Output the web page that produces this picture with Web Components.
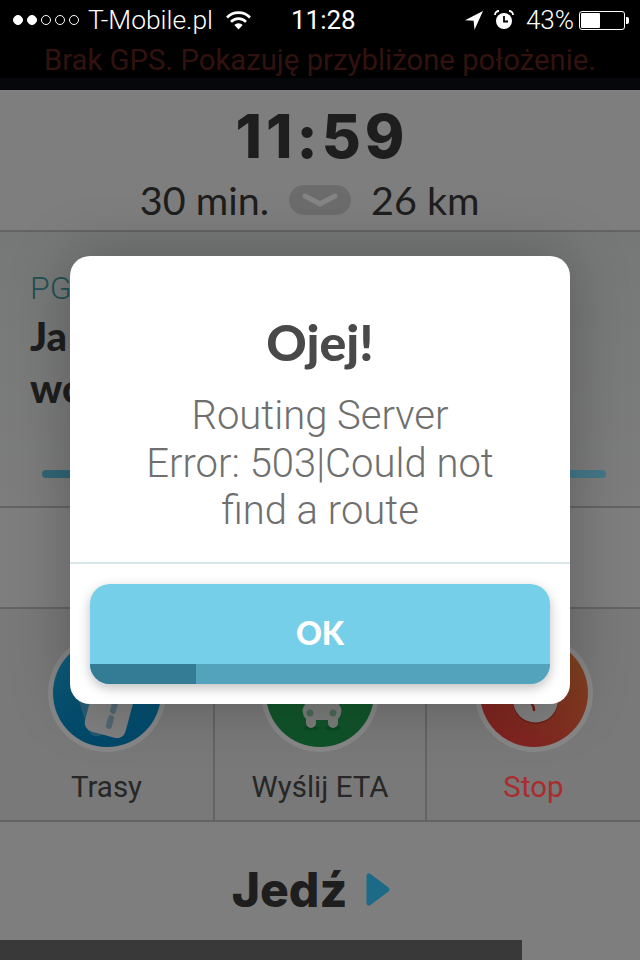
<!DOCTYPE html>
<html lang="pl">
<head>
<meta charset="utf-8">
<title>Ojej!</title>
<style>
  html, body { margin: 0; padding: 0; height: 960px; overflow: hidden; background: #000; }
</style>
</head>
<body>
<app-screen>
  <status-bar></status-bar>
  <gps-banner>Brak GPS. Pokazuję przybliżone położenie.</gps-banner>
  <eta-header time="11:59" duration="30 min." distance="26 km"></eta-header>
  <route-card>
    <span slot="tag">PG</span>
    <span slot="line1">Ja</span>
    <span slot="line2">wo</span>
  </route-card>
  <empty-row></empty-row>
  <action-row>
    <action-tile label="Trasy">
      <svg slot="icon" viewBox="0 0 118 118" width="118" height="118">
        <defs>
          <linearGradient id="b" x1="0" y1="0" x2="0" y2="1"><stop offset="0" stop-color="#1fb8f0"/><stop offset="1" stop-color="#0087c8"/></linearGradient>
          <clipPath id="cb"><circle cx="59" cy="59" r="54"/></clipPath>
        </defs>
        <circle cx="59" cy="59" r="59" fill="#fff"/>
        <circle cx="59" cy="59" r="54" fill="url(#b)"/>
        <g clip-path="url(#cb)">
          <rect x="30" y="22" width="42" height="78" rx="9" fill="#9bd8ee" opacity=".45" transform="rotate(-18 51 61)"/>
          <rect x="44" y="24" width="42" height="78" rx="9" fill="#f2f2f2" transform="rotate(15 65 63)"/>
          <rect x="63" y="66" width="6" height="14" rx="3" fill="#9fc4d4" transform="rotate(15 66 73)"/>
          <rect x="59" y="81" width="6" height="14" rx="3" fill="#9fc4d4" transform="rotate(15 62 88)"/>
        </g>
      </svg>
    </action-tile>
    <action-tile label="Wyślij ETA">
      <svg slot="icon" viewBox="0 0 118 118" width="118" height="118">
        <defs>
          <linearGradient id="g" x1="0" y1="0" x2="0" y2="1"><stop offset="0" stop-color="#2fb05a"/><stop offset="1" stop-color="#1c9a4e"/></linearGradient>
        </defs>
        <circle cx="59" cy="59" r="59" fill="#fff"/>
        <circle cx="59" cy="59" r="54" fill="url(#g)"/>
        <ellipse cx="50" cy="94" rx="8" ry="2.500" fill="#168a45"/>
        <ellipse cx="72" cy="94" rx="8" ry="2.500" fill="#168a45"/>
        <path d="M50 58h21a8 8 0 0 1 7 13 8 8 0 0 1 2 8 8 8 0 0 1-3 6v4a5 5 0 0 1-10 0v-3H55v3a5 5 0 0 1-10 0v-4a8 8 0 0 1-3-6 8 8 0 0 1 2-8 8 8 0 0 1 6-13z" fill="#e9ece9"/>
        <circle cx="49" cy="79" r="3.500" fill="#8fc7a2"/>
        <circle cx="72" cy="79" r="3.500" fill="#8fc7a2"/>
      </svg>
    </action-tile>
    <action-tile label="Stop" danger>
      <svg slot="icon" viewBox="0 0 118 118" width="118" height="118">
        <defs>
          <linearGradient id="r" x1="1" y1="0" x2=".3" y2="1"><stop offset="0" stop-color="#f58a3c"/><stop offset="1" stop-color="#f23f3f"/></linearGradient>
        </defs>
        <circle cx="59" cy="59" r="59" fill="#fff"/>
        <circle cx="59" cy="59" r="54" fill="url(#r)"/>
        <circle cx="60.500" cy="67" r="23" fill="#c93a2c"/>
        <circle cx="60.500" cy="66" r="22.500" fill="#f2f2f2"/>
        <path d="M57 70q2 3 2 6" fill="none" stroke="#d8372b" stroke-width="2.500" stroke-linecap="round"/>
      </svg>
    </action-tile>
  </action-row>
  <go-button>Jedź</go-button>
  <bottom-strip></bottom-strip>
  <alert-dialog heading="Ojej!" action="OK">Routing Server<br>Error: 503|Could not<br>find a route</alert-dialog>
</app-screen>

<script>
// small helper, every element gets the same open shadow root setup
function shadow(el, html) {
  el.attachShadow({ mode: 'open' });
  el.shadowRoot.innerHTML = html;
}

class AppScreen extends HTMLElement {
  connectedCallback() {
    shadow(this, `
      <style>
        :host {
          display: flex;
          flex-direction: column;
          position: relative;
          width: 640px;
          height: 960px;
          overflow: hidden;
          background: #eee;
          font-family: Lato, "Liberation Sans", sans-serif;
          color: #393939;
        }
      </style>
      <slot></slot>
    `);
  }
}

class StatusBar extends HTMLElement {
  connectedCallback() {
    shadow(this, `
      <style>
        :host {
          display: flex;
          align-items: center;
          position: relative;
          z-index: 3;
          height: 40px;
          flex: none;
          padding-left: 13px;
          background: #000;
          color: #fff;
          font: 300 26.4px Roboto, "Liberation Sans", sans-serif;
        }
        .dots { display: flex; gap: 4px; }
        .dots i { width: 10px; height: 10px; border-radius: 50%; box-sizing: border-box; border: 1px solid #fff; }
        .dots i.on { background: #fff; }
        .carrier { margin-left: 9px; }
        .wifi { margin-left: 13px; }
        .time { margin-left: 40px; font-weight: 400; font-size: 26px; }
        .right { display: flex; align-items: center; margin-left: auto; margin-right: 11px; }
        .alarm { margin-left: 11px; }
        .pct { margin-left: 12px; font-size: 26px; }
        .batt { display: flex; align-items: center; margin-left: 5px; }
        .batt b { display: block; box-sizing: border-box; width: 46px; height: 19px; border: 1px solid #fff; border-radius: 3px; padding: 1px; }
        .batt b::before { content: ""; display: block; width: 19px; height: 100%; background: #fff; border-radius: 1px; }
        .batt u { display: block; width: 3px; height: 7px; background: #fff; border-radius: 0 2px 2px 0; margin-left: 1px; }
      </style>
      <div class="dots"><i class="on"></i><i class="on"></i><i></i><i></i><i></i></div>
      <span class="carrier">T-Mobile.pl</span>
      <svg class="wifi" width="25" height="19" viewBox="0 0 25 19">
        <path d="M1 6.500a16 16 0 0 1 23 0" fill="none" stroke="#fff" stroke-width="2.600"/>
        <path d="M5 10.800a10.400 10.400 0 0 1 15 0" fill="none" stroke="#fff" stroke-width="2.600"/>
        <path d="M8.300 14a5.800 5.800 0 0 1 8.400 0l-4.200 4.600z" fill="#fff"/>
      </svg>
      <span class="time">11:28</span>
      <div class="right">
        <svg width="18" height="19" viewBox="0 0 18 19"><path d="M18 0 0 9.200l8.600.5.9 9z" fill="#fff"/></svg>
        <svg class="alarm" width="20" height="20" viewBox="0 0 20 20">
          <circle cx="10" cy="11" r="8" fill="#fff"/>
          <path d="M10 6v5.500h4" fill="none" stroke="#000" stroke-width="1.800"/>
          <path d="M1 5a4 4 0 0 1 4-4M19 5a4 4 0 0 0-4-4" fill="none" stroke="#fff" stroke-width="1.800"/>
        </svg>
        <span class="pct">43%</span>
        <div class="batt"><b></b><u></u></div>
      </div>
    `);
  }
}

class GpsBanner extends HTMLElement {
  connectedCallback() {
    shadow(this, `
      <style>
        :host {
          display: block;
          flex: none;
          height: 50px;
          background: linear-gradient(#000 38px, #0a0e14 38px);
          color: #5e231e;
          font: 400 29.3px Roboto, "Liberation Sans", sans-serif;
          text-align: center;
          line-height: 40px;
        }
      </style>
      <slot></slot>
    `);
  }
}

class EtaHeader extends HTMLElement {
  connectedCallback() {
    shadow(this, `
      <style>
        :host {
          display: flex;
          flex-direction: column;
          align-items: center;
          flex: none;
          box-sizing: border-box;
          height: 142px;
          padding-top: 13px;
          background: #eee;
          border-bottom: 2px solid #bdbdbd;
        }
        .time { font: 800 60px/66px Inter, sans-serif; letter-spacing: 4px; margin-right: -4px; }
        .row {
          display: grid;
          grid-template-columns: 1fr auto 1fr;
          align-items: center;
          gap: 20px;
          width: 100%;
          margin-top: 13px;
          font-size: 39.5px;
          line-height: 36px;
        }
        .row span:first-child { text-align: right; }
        .pill { display: flex; align-items: center; justify-content: center; width: 62px; height: 30px; border-radius: 15px; background: #ccc; }
      </style>
      <div class="time">${this.getAttribute('time')}</div>
      <div class="row">
        <span>${this.getAttribute('duration')}</span>
        <span class="pill">
          <svg width="36" height="14" viewBox="0 0 36 14"><path d="M3 3l15 8 15-8" fill="none" stroke="#fbfbfb" stroke-width="5" stroke-linecap="round" stroke-linejoin="round"/></svg>
        </span>
        <span>${this.getAttribute('distance')}</span>
      </div>
    `);
  }
}

class RouteCard extends HTMLElement {
  connectedCallback() {
    shadow(this, `
      <style>
        :host {
          display: block;
          flex: none;
          box-sizing: border-box;
          height: 276px;
          padding: 38px 34px 0 30px;
          background: linear-gradient(#dfe2e2, #ececec);
          border-bottom: 2px solid #bdbdbd;
        }
        .tag { font: 300 32px Roboto, sans-serif; line-height: 36px; color: #3f9aa0; }
        .name { font-size: 40px; font-weight: 900; line-height: 52px; margin-top: 4px; }
        .bar { display: flex; height: 8px; margin: 56px 0 0 12px; border-radius: 4px; overflow: hidden; }
        .bar i { flex: 1; background: #80e0ff; }
        .bar i:first-child { background: #5cc0de; }
      </style>
      <div class="tag"><slot name="tag"></slot></div>
      <div class="name"><slot name="line1"></slot></div>
      <div class="name" style="margin-top:0"><slot name="line2"></slot></div>
      <div class="bar"><i></i><i></i></div>
    `);
  }
}

class EmptyRow extends HTMLElement {
  connectedCallback() {
    shadow(this, `
      <style>
        :host { display: block; flex: none; box-sizing: border-box; height: 101px; border-bottom: 2px solid #bdbdbd; }
      </style>
    `);
  }
}

class ActionRow extends HTMLElement {
  connectedCallback() {
    shadow(this, `
      <style>
        :host {
          display: grid;
          grid-template-columns: 213px 212px 1fr;
          flex: none;
          box-sizing: border-box;
          height: 213px;
          background: #e4e4e4;
          border-bottom: 2px solid #bdbdbd;
        }
      </style>
      <slot></slot>
    `);
  }
}

class ActionTile extends HTMLElement {
  connectedCallback() {
    const danger = this.hasAttribute('danger');
    shadow(this, `
      <style>
        :host {
          display: flex;
          flex-direction: column;
          align-items: center;
          box-sizing: border-box;
          padding-top: 25px;
          border-left: 2px solid #bdbdbd;
        }
        :host(:first-child) { border-left: 0; }
        ::slotted(svg) { display: block; }
        .label {
          margin-top: 17px;
          font: 400 29.500px Roboto, sans-serif;
          line-height: 36px;
          color: #4a4a4a;
        }
        /* this label is brighter than the scrim lets through */
        .label.danger { position: relative; z-index: 3; color: #ab2c2f; }
      </style>
      <slot name="icon"></slot>
      <div class="label${danger ? ' danger' : ''}">${this.getAttribute('label')}</div>
    `);
  }
}

class GoButton extends HTMLElement {
  connectedCallback() {
    shadow(this, `
      <style>
        :host {
          display: flex;
          align-items: center;
          justify-content: center;
          gap: 19px;
          flex: none;
          box-sizing: border-box;
          height: 118px;
          padding: 16px 18px 0 0;
          font: 800 48px Inter, sans-serif;
        }
      </style>
      <span><slot></slot></span>
      <svg width="24" height="33" viewBox="0 0 24 33"><path d="M3 3v27l18-13.500z" fill="#37c8ff" stroke="#37c8ff" stroke-width="5" stroke-linejoin="round"/></svg>
    `);
  }
}

class BottomStrip extends HTMLElement {
  connectedCallback() {
    shadow(this, `
      <style>
        :host { display: block; flex: none; width: 522px; height: 20px; background: #6c6c6c; }
      </style>
    `);
  }
}

class AlertDialog extends HTMLElement {
  connectedCallback() {
    shadow(this, `
      <style>
        :host {
          display: flex;
          align-items: center;
          justify-content: center;
          position: absolute;
          inset: 0;
          z-index: 2;
          background: rgba(0, 0, 0, .47);
        }
        .box {
          box-sizing: border-box;
          width: 500px;
          height: 448px;
          border-radius: 20px;
          background: #fff;
          box-shadow: 0 0 60px rgba(0, 0, 0, .25);
          text-align: center;
        }
        .top { box-sizing: border-box; height: 308px; padding-top: 56px; border-bottom: 2px solid #d8e6ea; }
        h2 { margin: 0; font: 900 50px/60px Lato, sans-serif; color: #494949; }
        .msg { margin-top: 20px; font: 300 40px/47.500px Roboto, sans-serif; color: #6f6f6f; }
        .pad { padding: 20px; }
        .btn {
          display: flex;
          flex-direction: column;
          height: 100px;
          border-radius: 20px;
          overflow: hidden;
          background: #76cfe9;
          box-shadow: 0 4px 12px rgba(0, 0, 0, .25);
          color: #fff;
          font: 900 32px Lato, sans-serif;
        }
        .label { flex: 1; display: flex; align-items: center; justify-content: center; padding-top: 16px; }
        .track { flex: none; height: 20px; background: #53a3bd; }
        .track i { display: block; width: 106px; height: 100%; background: #347c95; }
      </style>
      <div class="box">
        <div class="top">
          <h2>${this.getAttribute('heading')}</h2>
          <div class="msg"><slot></slot></div>
        </div>
        <div class="pad">
          <div class="btn">
            <div class="label">${this.getAttribute('action')}</div>
            <div class="track"><i></i></div>
          </div>
        </div>
      </div>
    `);
  }
}

customElements.define('app-screen', AppScreen);
customElements.define('status-bar', StatusBar);
customElements.define('gps-banner', GpsBanner);
customElements.define('eta-header', EtaHeader);
customElements.define('route-card', RouteCard);
customElements.define('empty-row', EmptyRow);
customElements.define('action-row', ActionRow);
customElements.define('action-tile', ActionTile);
customElements.define('go-button', GoButton);
customElements.define('bottom-strip', BottomStrip);
customElements.define('alert-dialog', AlertDialog);
</script>
</body>
</html>
